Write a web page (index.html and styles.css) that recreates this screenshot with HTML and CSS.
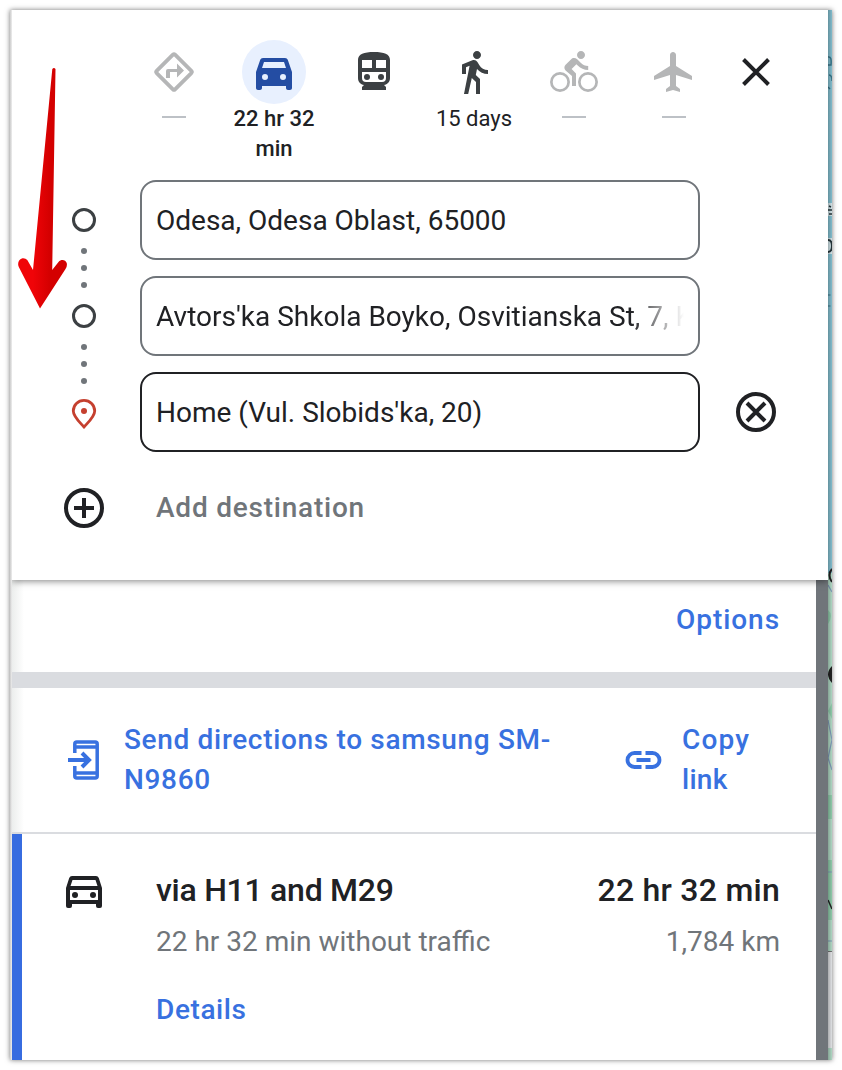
FILE: index.html
```html
<!DOCTYPE html>
<html lang="en">
<head>
<meta charset="utf-8">
<title>Directions</title>
<link rel="stylesheet" href="styles.css">
</head>
<body>
<main class="frame">
  <div class="panel">
    <header class="search">
      <nav class="modes">
        <div class="mode muted">
          <span class="badge"><svg width="48" height="48" viewBox="0 0 48 48"><rect x="11" y="11" width="26" height="26" rx="1.500" fill="none" stroke="currentColor" stroke-width="3.800" transform="rotate(45 24 24)"/><path d="M16 30v-7q0-2 2-2h9v-5.500l7 7-7 7v-5.500h-7v6z" fill="currentColor"/></svg></span>
          <span class="dash"></span>
        </div>
        <div class="mode active">
          <span class="badge"><svg width="48" height="48" viewBox="0 0 24 24"><path fill="currentColor" fill-rule="evenodd" d="M18.920 6.010C18.720 5.420 18.160 5 17.500 5h-11c-.66 0-1.210.42-1.420 1.010L3 12v8c0 .55.45 1 1 1h1c.55 0 1-.45 1-1v-1h12v1c0 .55.45 1 1 1h1c.55 0 1-.45 1-1v-8zM6 10l1-3h10l1 3zM7.500 13a1.500 1.500 0 1 0 0 3 1.500 1.500 0 0 0 0-3zM16.500 13a1.500 1.500 0 1 0 0 3 1.500 1.500 0 0 0 0-3z"/></svg></span>
          <span class="time">22 hr 32<br>min</span>
        </div>
        <div class="mode">
          <span class="badge"><svg width="48" height="48" viewBox="0 0 48 48"><path fill="currentColor" fill-rule="evenodd" d="M8 12c0-6 6-8 16-8s16 2 16 8v18c0 4-2.500 6.500-6 7l2 2v3H12v-3l2-2c-3.500-.5-6-3-6-7zM12 12v8h10v-8zM26 12v8h10v-8zM12 24v6q0 4 4 4h16q4 0 4-4v-6z"/><circle cx="17" cy="29" r="3" fill="currentColor"/><circle cx="31" cy="29" r="3" fill="currentColor"/></svg></span>
        </div>
        <div class="mode">
          <span class="badge"><svg width="48" height="48" viewBox="0 0 24 24"><path fill="currentColor" d="M13.500 5.500c1.100 0 2-.9 2-2s-.9-2-2-2-2 .9-2 2 .9 2 2 2zM9.800 8.900L7 23h2.100l1.800-8 2.100 2v6h2v-7.500l-2.100-2 .6-3C14.800 12 16.800 13 19 13v-2c-1.900 0-3.500-1-4.300-2.400l-1-1.600c-.4-.6-1-1-1.700-1-.3 0-.5.1-.8.1L6 8.300V13h2V9.600l1.800-.7"/></svg></span>
          <span class="time regular">15 days</span>
        </div>
        <div class="mode muted">
          <span class="badge"><svg width="48" height="48" viewBox="0 0 24 24"><path fill="currentColor" d="M15.500 5.500c1.100 0 2-.9 2-2s-.9-2-2-2-2 .9-2 2 .9 2 2 2zM10.800 10.500l2.400-2.400.8.8c1.300 1.300 3 2.100 5.100 2.100V9c-1.500 0-2.700-.6-3.600-1.500l-1.900-1.900c-.5-.4-1-.6-1.600-.6s-1.100.2-1.400.6L7.800 8.400c-.4.4-.6.9-.6 1.400 0 .6.2 1.100.6 1.400L11 14v5h2v-6.200l-2.200-2.300z"/><g fill="none" stroke="currentColor" stroke-width="1.350"><circle cx="5" cy="17" r="4.320"/><circle cx="19" cy="17" r="4.320"/></g></svg></span>
          <span class="dash"></span>
        </div>
        <div class="mode muted">
          <span class="badge"><svg width="48" height="48" viewBox="0 0 24 24"><path fill="currentColor" d="M21 16v-2l-8-5V3.500c0-.83-.67-1.500-1.500-1.500S10 2.670 10 3.500V9l-8 5v2l8-2.500V19l-2 1.500V22l3.500-1 3.500 1v-1.500L13 19v-5.500l8 2.500z"/></svg></span>
          <span class="dash"></span>
        </div>
        <span class="close"><svg width="48" height="48" viewBox="0 0 48 48"><path d="M11.500 11.500l25 25M36.500 11.500l-25 25" fill="none" stroke="currentColor" stroke-width="4"/></svg></span>
      </nav>
      <div class="stops">
        <svg class="rail" width="112" height="368" viewBox="0 0 112 368">
          <g fill="none" stroke="#3c4043" stroke-width="3"><circle cx="56" cy="40" r="10.500"/><circle cx="56" cy="136" r="10.500"/></g>
          <g fill="#70757a"><circle cx="56" cy="71" r="3"/><circle cx="56" cy="88" r="3"/><circle cx="56" cy="105" r="3"/><circle cx="56" cy="167" r="3"/><circle cx="56" cy="184" r="3"/><circle cx="56" cy="201" r="3"/></g>
          <path d="M56 247C51 241.500 45.300 236.500 45.300 231C45.300 225 50 220.400 56 220.400S66.700 225 66.700 231C66.700 236.500 61 241.500 56 247z" fill="none" stroke="#c5402f" stroke-width="2.800"/><circle cx="56" cy="231" r="3" fill="#c5402f"/>
          <circle cx="56" cy="328" r="18" fill="none" stroke="#202124" stroke-width="4"/><path d="M56 318v20M46 328h20" stroke="#202124" stroke-width="4"/>
        </svg>
        <div class="fields">
          <div class="field"><span class="value">Odesa, Odesa Oblast, 65000</span></div>
          <div class="field"><span class="value fade">Avtors'ka Shkola Boyko, Osvitianska St, 7, K</span></div>
          <div class="field focused"><span class="value">Home (Vul. Slobids'ka, 20)</span></div>
          <div class="add">Add destination</div>
        </div>
        <span class="remove"><svg width="48" height="48" viewBox="0 0 48 48"><g fill="none" stroke="currentColor" stroke-width="4"><circle cx="24" cy="24" r="18"/><path d="M15 15l18 18M33 15l-18 18"/></g></svg></span>
      </div>
    </header>
    <div class="lower">
      <div class="results">
        <section class="options"><a>Options</a></section>
        <section class="actions">
          <svg class="send-icon" width="48" height="48" viewBox="0 0 48 48"><g fill="none" stroke="currentColor" stroke-width="4"><path d="M14.800 17V8q0-2 2-2h18.400q2 0 2 2v32q0 2-2 2H16.800q-2 0-2-2V30" stroke-width="3.500"/><path d="M15 11h22M15 37h22" stroke-width="3.500"/><path d="M8 24h21"/><path d="M22 17l7 7-7 7"/></g></svg>
          <a class="send">Send directions to samsung SM-<br>N9860</a>
          <svg class="link-icon" width="48" height="48" viewBox="0 0 48 48"><path d="M22.500 17h-7a7 7 0 0 0 0 14h7M26.500 17h7a7 7 0 0 1 0 14h-7M17.500 24h14" fill="none" stroke="currentColor" stroke-width="3.800"/></svg>
          <a class="copy">Copy<br><span class="tight">link</span></a>
        </section>
        <section class="route">
          <svg class="car" width="48" height="48" viewBox="0 0 48 48"><path fill="currentColor" fill-rule="evenodd" d="M12 8h24q2 0 2.800 2L42 20v18q0 2-2 2h-2q-2 0-2-2v-2H12v2q0 2-2 2H8q-2 0-2-2V20l3.200-10q.8-2 2.800-2zM12.500 12l-2 6h27l-2-6zM10 22v10h28V22z"/><circle cx="15" cy="27" r="3" fill="currentColor"/><circle cx="33" cy="27" r="3" fill="currentColor"/></svg>
          <div class="summary">
            <div class="line title"><span class="via">via H11 and M29</span><span class="duration">22 hr 32 min</span></div>
            <div class="line sub"><span>22 hr 32 min without traffic</span><span>1,784 km</span></div>
            <a class="details">Details</a>
          </div>
        </section>
      </div>
      <div class="scrollbar"></div>
    </div>
  </div>
  <svg class="map" width="4" height="1050" viewBox="0 0 4 1050">
    <defs><linearGradient id="edge"><stop offset="0" stop-color="#000" stop-opacity=".26"/><stop offset="1" stop-color="#000" stop-opacity=".04"/></linearGradient></defs>
    <rect width="4" height="1050" fill="#86c3d4"/>
    <rect y="563" width="4" height="487" fill="#b5dfca"/>
    <path d="M0 600q6 5 0 14zM4 693l-4 8 4 8zM0 785h4v24H0zM0 850h4v60H0z" fill="#94d2b0"/>
    <path d="M0 47q4-1 3 8H0M1 65q3 0 3 6M0 77l2 2" fill="none" stroke="#39778b" stroke-width="1.500"/>
    <path d="M0 285h2.500M0 296h2.500" stroke="#39778b"/>
    <path d="M0 193h4v13H0zM0 228h4v16H0z" fill="#d5e9ee"/>
    <path d="M1 196l2 1M0 200h4M1 204h3" stroke="#26363b" stroke-width="1.500"/>
    <path d="M0 230q4 0 4 6t-4 6" fill="none" stroke="#26363b" stroke-width="2"/>
    <path d="M4 559q-5 6 0 13" fill="none" stroke="#222" stroke-width="2"/><path d="M4 656q-8 8 0 17z" fill="#222"/>
    <path d="M0 575l4 7M0 710l4 20-4 18 4 12M0 862h4M0 931h4" fill="none" stroke="#849fbe" stroke-width="1.200"/>
    <path d="M0 890l4 9" stroke="#222" stroke-width="1.500"/>
    <path d="M0 942h4v96H0z" fill="#e8eaed"/><path d="M0 941.500h4" stroke="#777"/>
    <rect width="4" height="1050" fill="url(#edge)"/>
  </svg>
  <svg class="arrow" width="60" height="250" viewBox="12 62 60 250">
    <defs><linearGradient id="red"><stop offset=".3" stop-color="#f00408"/><stop offset=".65" stop-color="#d40000"/></linearGradient></defs>
    <path d="M52.300 69Q54 66.800 55.500 69L52.200 270L58.500 262C61 259 65.500 259.500 66.700 263Q67.500 266 65.500 269L40 308.500L18.800 267C17 263 19 259 22.500 258.300Q25.500 258 27.300 260L33 270z" fill="url(#red)"/>
  </svg>
</main>
</body>
</html>
```
FILE: styles.css
```css
* { box-sizing: border-box; }
body { margin: 0; background: #fff; font-family: Roboto, sans-serif; color: #202124; }
svg { display: block; flex: none; }
.frame {
  position: relative; display: flex; width: 822px; height: 1050px; margin: 10px;
  padding-left: 2px; background: linear-gradient(90deg, #ccc 0, #eee 2px, #fff 2px);
  box-shadow: 0 0 5px rgba(0, 0, 0, .55);
}
.panel { width: 816px; display: flex; flex-direction: column; }
.search {
  position: relative; height: 570px; padding: 30px 16px 32px; background: #fff;
  box-shadow: 0 1px 7px rgba(0, 0, 0, .5); clip-path: inset(0 0 -12px 0);
}
.modes { display: flex; height: 140px; padding-left: 96px; }
.mode { width: 100px; display: flex; flex-direction: column; align-items: center; color: #3c4043; }
.badge { width: 64px; height: 64px; display: flex; align-items: center; justify-content: center; border-radius: 50%; }
.active { color: #244da3; }
.active .badge { background: #e8f0fe; }
.muted { color: #b5b6b7; }
.dash { width: 24px; height: 2px; margin-top: 12px; background: #bdc1c6; }
.time { font-size: 22px; line-height: 30px; font-weight: 500; color: #202124; text-align: center; white-space: nowrap; }
.regular { font-weight: 400; }
.close { height: 64px; margin-left: 8px; display: flex; align-items: center; }
.stops { display: grid; grid-template-columns: 112px 560px 112px; }
.fields { display: grid; grid-template-columns: 560px; grid-auto-rows: 80px; row-gap: 16px; }
.field {
  display: flex; align-items: center; padding: 2px 14px 0; border: 2px solid #70757a;
  border-radius: 16px; font-size: 28px; white-space: nowrap;
}
.focused { border-color: #202124; }
.value { line-height: 40px; }
.fade { -webkit-mask-image: linear-gradient(90deg, #000 474px, transparent 528px); mask-image: linear-gradient(90deg, #000 474px, transparent 528px); }
.add { display: flex; align-items: center; padding: 0 0 2px 16px; font-size: 28px; font-weight: 500; letter-spacing: .77px; color: #70757a; }
.remove { padding-top: 208px; display: flex; justify-content: center; align-items: flex-start; }
.lower { display: flex; height: 480px; }
.results { width: 804px; background: linear-gradient(90deg, #eceeed, #fff 12px); }
.scrollbar { width: 12px; background: #70757a; }
a { color: #3871e0; font-size: 28px; font-weight: 500; line-height: 40px; }
.options { height: 108px; padding: 20px 36px 0 0; text-align: right; letter-spacing: .95px; border-bottom: 16px solid #dadce0; }
.actions { display: flex; height: 146px; padding: 32px 0 0 48px; border-bottom: 2px solid #dadce0; color: #3871e0; }
.send-icon, .link-icon { margin-top: 16px; }
.send { width: 495px; margin-left: 16px; letter-spacing: .67px; white-space: nowrap; }
.copy { margin-left: 15px; letter-spacing: 1.2px; }
.tight { letter-spacing: .3px; }
.route { display: flex; height: 226px; padding: 34px 36px 0 38px; border-left: 10px solid #376ce0; background: #fff; }
.summary { flex: 1; margin-left: 48px; }
.line { display: flex; justify-content: space-between; white-space: nowrap; }
.title { font-size: 32px; line-height: 44px; font-weight: 500; }
.via { letter-spacing: -.27px; }
.duration { letter-spacing: .25px; }
.sub { margin-top: 10px; font-size: 28px; line-height: 40px; color: #70757a; }
.details { display: block; margin-top: 28px; letter-spacing: .6px; }
.arrow { position: absolute; left: 2px; top: 52px; }
```
